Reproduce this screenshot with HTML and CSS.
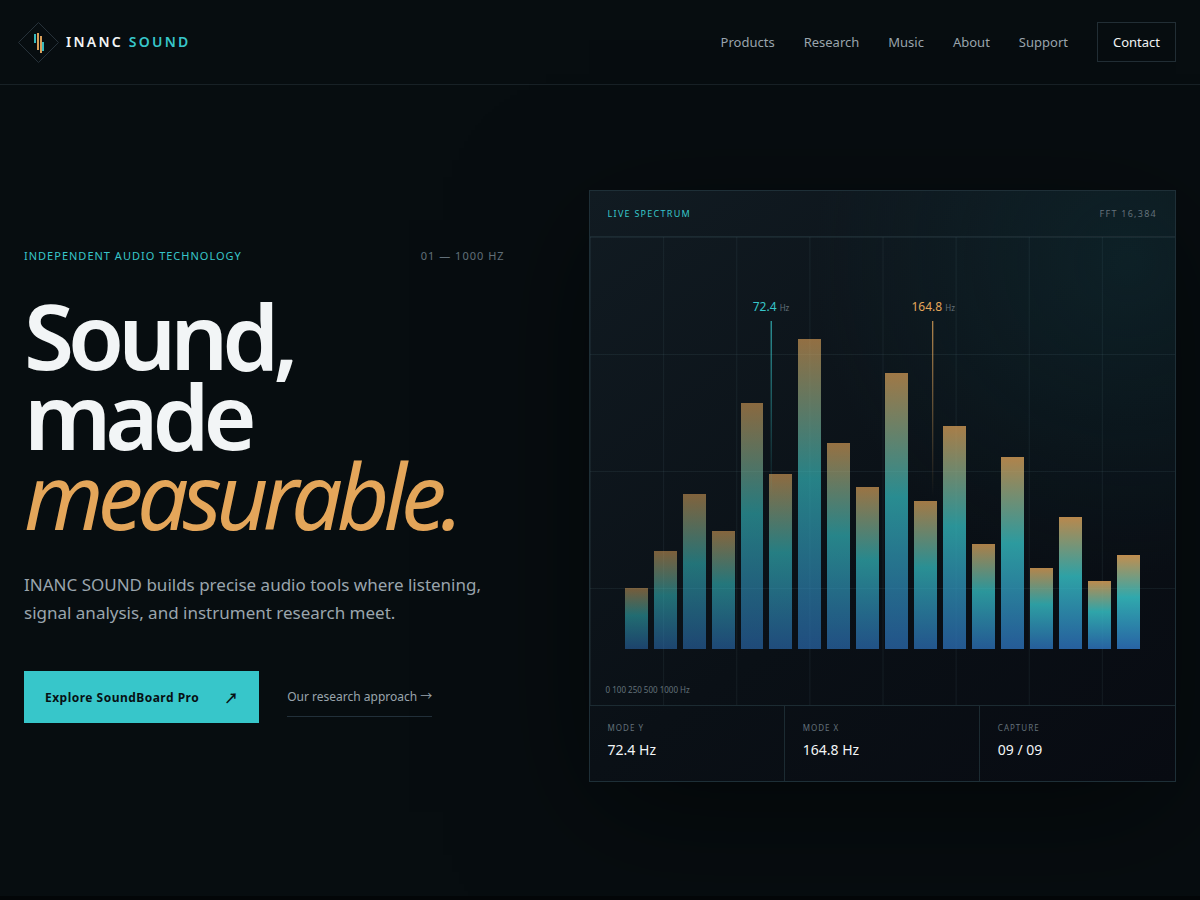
FILE: index.html
```html
<!DOCTYPE html>
<html lang="en">
<head>
    <meta charset="UTF-8">
    <meta name="viewport" content="width=device-width, initial-scale=1.0">
    <title>INANC SOUND</title>
    <link rel="stylesheet" href="styles.css">
</head>
<body>
    <header class="site-header">
        <a class="brand" href="#">
            <svg class="brand-mark" viewBox="0 0 42 42" aria-hidden="true">
                <path d="M20.5 1.5 40.5 21.5 20.5 41.5 .5 21.5Z" fill="none" stroke="#263139"/>
                <g stroke-width="2">
                    <path d="M17 13v9M25 21v9" stroke="#37b9bd"/>
                    <path d="M20 12v17M23 15v17" stroke="#d99f5a"/>
                </g>
            </svg>
            <span class="brand-name">INANC <span>SOUND</span></span>
        </a>
        <nav class="site-nav">
            <a href="#products">Products</a>
            <a href="#research">Research</a>
            <a href="#music">Music</a>
            <a href="#about">About</a>
            <a href="#support">Support</a>
            <a href="#contact" class="nav-contact">Contact</a>
        </nav>
    </header>

    <main class="hero">
        <section class="hero-copy">
            <div class="eyebrow">
                <span>Independent audio technology</span>
                <span class="eyebrow-range">01 — 1000 Hz</span>
            </div>
            <h1>Sound,<br>made<br><em>measurable.</em></h1>
            <p class="lead">INANC SOUND builds precise audio tools where listening, signal analysis, and instrument research meet.</p>
            <div class="actions">
                <a class="button" href="#products">Explore SoundBoard Pro <span class="arrow">↗</span></a>
                <a class="text-link" href="#research">Our research approach <span class="arrow">→</span></a>
            </div>
        </section>

        <section class="panel">
            <div class="panel-head">
                <span>Live spectrum</span>
                <span class="panel-fft">FFT 16,384</span>
            </div>
            <div class="chart">
                <div class="bars" id="bars"></div>
                <div class="marker marker-y"><span>72.4 <small>Hz</small></span></div>
                <div class="marker marker-x"><span>164.8 <small>Hz</small></span></div>
                <div class="axis">0 100 250 500 1000 Hz</div>
            </div>
            <dl class="readout">
                <div><dt>Mode Y</dt><dd>72.4 Hz</dd></div>
                <div><dt>Mode X</dt><dd>164.8 Hz</dd></div>
                <div><dt>Capture</dt><dd>09 / 09</dd></div>
            </dl>
        </section>
    </main>

    <section class="next"></section>

    <script>
        const levels = [18, 29, 46, 35, 73, 52, 92, 61, 48, 82, 44, 66, 31, 57, 24, 39, 20, 28];
        const bars = document.getElementById('bars');

        levels.forEach((level, i) => {
            const bar = document.createElement('i');
            bar.style.height = level + '%';
            // bars get brighter towards the high frequencies
            bar.style.opacity = 0.5 + i * 0.02;
            bars.appendChild(bar);
        });
    </script>
</body>
</html>
```
FILE: styles.css
```css
:root {
  --bg: #070d10;
  --line: #1c2b32;
  --text: #f2f5f6;
  --muted: #9aa5ad;
  --dim: #63717a;
  --teal: #37c6ca;
  --amber: #e4a65a;
}

* {
  box-sizing: border-box;
}

body {
  display: flex;
  flex-direction: column;
  min-height: 100vh;
  margin: 0;
  font-family: "Noto Sans", sans-serif;
  background: var(--bg);
  color: var(--text);
}

a {
  color: inherit;
  text-decoration: none;
}

.site-header {
  display: flex;
  justify-content: space-between;
  align-items: center;
  padding: 22px 24px;
  border-bottom: 1px solid #182126;
}

.brand {
  display: flex;
  align-items: center;
  gap: 6px;
  margin: -1px 0 -1px -6px;
}

.brand-mark {
  width: 42px;
  height: 42px;
}

.brand-name {
  font-size: 14px;
  line-height: 18px;
  font-weight: 600;
  letter-spacing: 0.16em;
}

.brand-name span {
  color: var(--teal);
}

.site-nav {
  display: flex;
  align-items: center;
  gap: 29px;
  font-size: 13px;
  line-height: 18px;
  color: var(--muted);
}

.nav-contact {
  padding: 10px 15px;
  border: 1px solid #222e35;
  color: var(--text);
}

.hero {
  display: grid;
  grid-template-columns: 9fr 11fr;
  gap: 7vw;
  align-items: center;
  padding: 105px 24px 114px;
}

.eyebrow {
  display: flex;
  justify-content: space-between;
  font-size: 11px;
  line-height: 14px;
  letter-spacing: 1px;
  text-transform: uppercase;
  color: var(--teal);
}

.eyebrow-range {
  color: var(--dim);
}

h1 {
  margin: 32px 0 36px;
  font-size: 91px;
  line-height: 80px;
  font-weight: 600;
  letter-spacing: -6px;
}

h1 em {
  font-weight: 400;
  color: var(--amber);
}

.lead {
  margin: 0;
  font-size: 17px;
  line-height: 28px;
  color: var(--muted);
}

.actions {
  display: flex;
  align-items: center;
  gap: 28px;
  margin-top: 44px;
}

.arrow {
  font-family: "Noto Sans CJK JP", sans-serif;
  font-weight: 400;
  line-height: 1;
  letter-spacing: 0;
}

.button {
  display: flex;
  align-items: center;
  gap: 25px;
  height: 52px;
  padding: 0 21px;
  background: var(--teal);
  color: #071013;
  font-size: 12px;
  font-weight: 700;
  letter-spacing: 0.04em;
}

.button .arrow {
  font-size: 14px;
  font-weight: 700;
}

.text-link {
  padding: 11px 0;
  border-bottom: 1px solid #22303a;
  color: var(--muted);
  font-size: 12px;
  line-height: 16px;
}

.panel {
  border: 1px solid #1e2f37;
  background:
    radial-gradient(circle at 92% 12%, rgba(16, 58, 64, 0.35), transparent 42%),
    linear-gradient(145deg, #111b22, #0a1016 58%, #080b12);
  box-shadow: 0 30px 120px rgba(0, 0, 0, 0.5);
}

.panel-head {
  display: flex;
  justify-content: space-between;
  align-items: center;
  height: 46px;
  padding: 0 18px;
  border-bottom: 1px solid var(--line);
  font-size: 9px;
  letter-spacing: 0.14em;
  text-transform: uppercase;
  color: var(--teal);
}

.panel-fft {
  color: var(--dim);
}

.chart {
  position: relative;
  display: flex;
  flex-direction: column;
  justify-content: flex-end;
  height: 52vw;
  max-height: 468px;
  background:
    linear-gradient(rgba(110, 150, 160, 0.1) 1px, transparent 1px) 0 0 / 100% 25%,
    linear-gradient(90deg, rgba(110, 150, 160, 0.1) 1px, transparent 1px) 0 0 / 12.5% 100%;
}

.bars {
  display: flex;
  align-items: flex-end;
  gap: 6px;
  height: 72%;
  padding: 0 6%;
}

.bars i {
  flex: 1;
  background: linear-gradient(var(--amber), var(--teal) 45%, #2e74c0);
}

.axis {
  height: 12%;
  padding: 35px 16px 0;
  font-size: 8px;
  line-height: 12px;
  color: var(--dim);
}

.marker {
  position: absolute;
  top: 13%;
  display: flex;
  flex-direction: column;
  align-items: center;
  gap: 5px;
  transform: translateX(-50%);
  font-size: 12px;
  line-height: 17px;
  white-space: nowrap;
}

.marker::after {
  content: "";
  width: 1px;
  height: 175px;
  background: linear-gradient(currentColor, transparent);
}

.marker small {
  font-size: 8px;
  color: var(--dim);
}

.marker-y {
  left: 31%;
  color: var(--teal);
}

.marker-x {
  left: 58.7%;
  color: var(--amber);
}

.readout {
  display: grid;
  grid-template-columns: repeat(3, 1fr);
  margin: 0;
  border-top: 1px solid var(--line);
}

.readout div {
  padding: 16px 18px 21px;
  border-right: 1px solid var(--line);
}

.readout div:last-child {
  border-right: 0;
}

.readout dt {
  font-size: 8px;
  line-height: 12px;
  letter-spacing: 1px;
  text-transform: uppercase;
  color: var(--dim);
}

.readout dd {
  margin: 6px 0 0;
  font-size: 14px;
  line-height: 20px;
}

.next {
  flex: 1;
  background: #030608;
}
```
